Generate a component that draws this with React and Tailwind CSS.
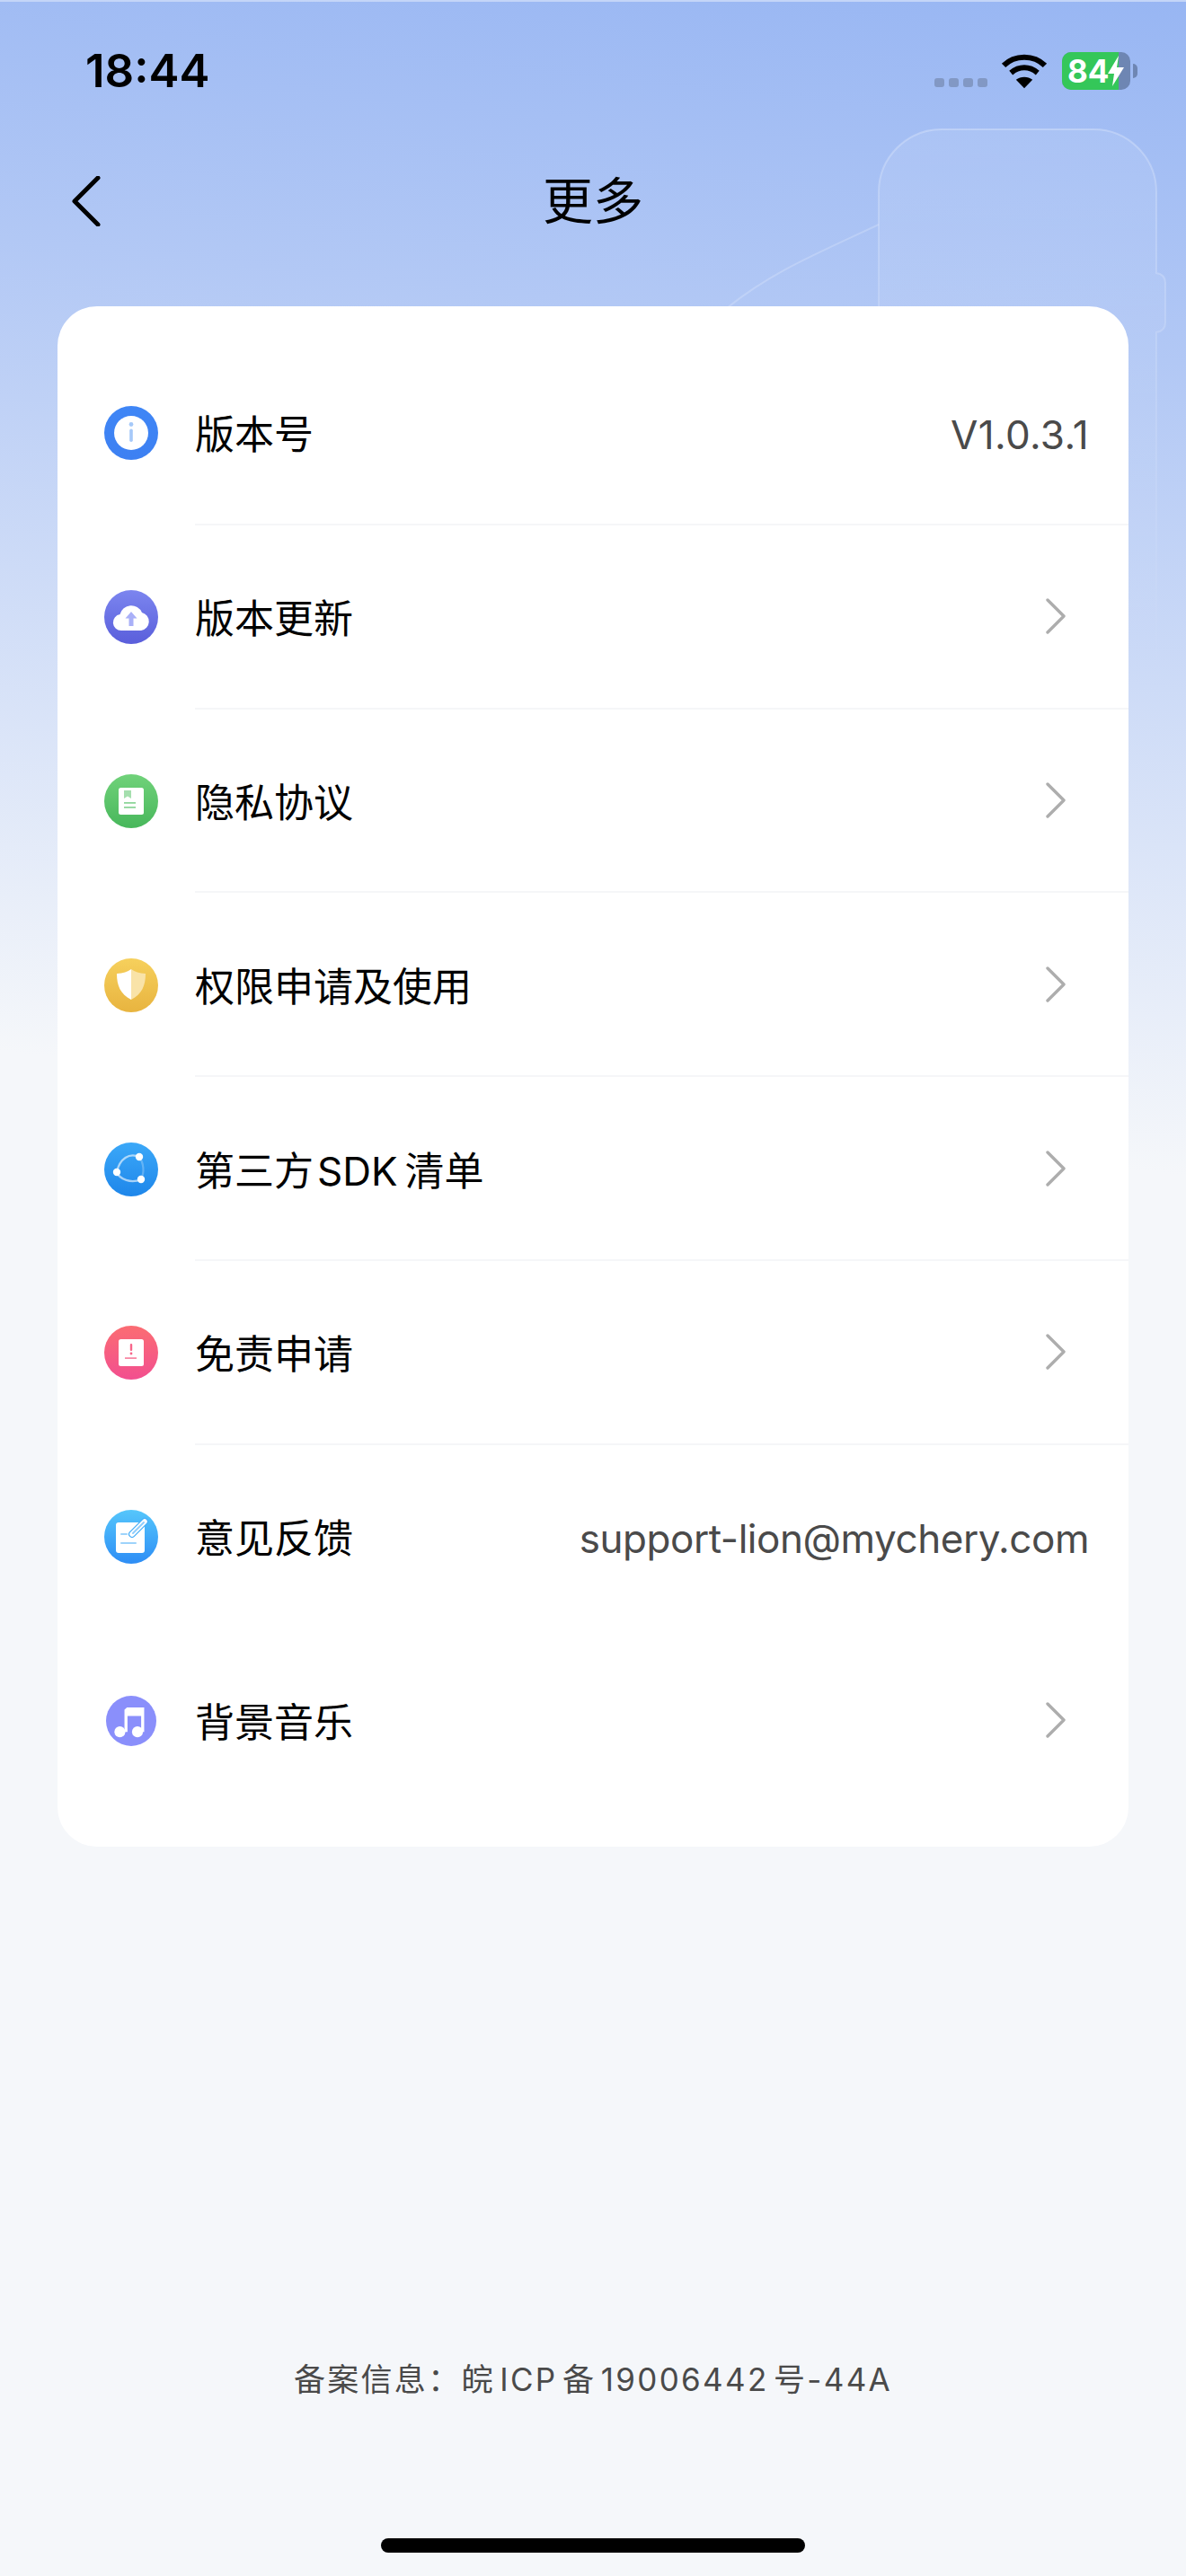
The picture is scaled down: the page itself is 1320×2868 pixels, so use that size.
import React from "react";

const FONT = 'font-["Inter","Noto_Sans_CJK_SC",sans-serif]';

// Icon glyphs, all on a 60x60 grid
const InfoGlyph = () => (
  <>
    <circle cx="30" cy="30" r="19" fill="#fff" />
    <circle cx="30" cy="20.5" r="2.4" fill="#a6c9f9" />
    <rect x="28.2" y="25.5" width="3.6" height="14.5" rx="1.8" fill="#a6c9f9" />
  </>
);

const CloudGlyph = () => (
  <>
    <path d="M19 45a9 9 0 0 1-1.5-17.9A13 13 0 0 1 42 25a10.2 10.2 0 0 1-1 20z" fill="#fff" />
    <path d="M30 24l6.5 7.5h-4V40h-5v-8.500h-4z" fill="#a9b0f8" />
  </>
);

const BookGlyph = () => (
  <>
    <rect x="16" y="15" width="28" height="30" rx="2.5" fill="#fff" />
    <path d="M22 18h8v9l-4-2.500-4 2.500z" fill="#a5dfae" />
    <rect x="22" y="31" width="13" height="1.800" fill="#8fd69b" />
    <rect x="22" y="36" width="13" height="1.800" fill="#8fd69b" />
  </>
);

const ShieldGlyph = () => (
  <>
    <path d="M30 12c-4 3-9 4.500-16 5 0 13 4 23 16 29z" fill="#fff" />
    <path d="M30 12c4 3 9 4.500 16 5 0 13-4 23-16 29z" fill="#f9e3a8" />
  </>
);

const SdkGlyph = () => (
  <>
    <path d="M39 16C28 11 17 18 14 33" fill="none" stroke="#fff" strokeOpacity="0.6" strokeWidth="2.200" />
    <path d="M14 33C17 41 30 46 41 41" fill="none" stroke="#fff" strokeOpacity="0.6" strokeWidth="2.200" />
    <path d="M41 41C45 33 44 23 39 16" fill="none" stroke="#fff" strokeOpacity="0.25" strokeWidth="2.200" />
    <circle cx="39" cy="16" r="4.200" fill="#fff" />
    <circle cx="14" cy="33" r="4.200" fill="#fff" />
    <circle cx="41" cy="41" r="4.200" fill="#fff" />
  </>
);

const AlertGlyph = () => (
  <>
    <rect x="16" y="15" width="28" height="30" rx="2.5" fill="#fff" />
    <rect x="28.800" y="20" width="2.400" height="8" rx="1" fill="#f7668a" />
    <circle cx="30" cy="31" r="1.400" fill="#f7668a" />
    <rect x="23" y="35.200" width="13" height="1.800" fill="#f88aa6" />
  </>
);

const NoteGlyph = () => (
  <>
    <rect x="13" y="14" width="32" height="34" rx="3" fill="#fff" />
    <rect x="18" y="26" width="8" height="2" rx="1" fill="#9dd3fb" />
    <rect x="18" y="36" width="18" height="2" rx="1" fill="#9dd3fb" />
    <path d="M31 27L45 13" stroke="#46aef8" strokeWidth="8" strokeLinecap="round" />
    <path d="M31 27L45 13" stroke="#fff" strokeWidth="5.500" strokeLinecap="round" />
    <path d="M32 26L44 14" stroke="#8fcdfb" strokeWidth="2" strokeLinecap="round" />
  </>
);

const MusicGlyph = () => (
  <>
    <path
      d="M22 43V16.500L25 14h20.500v29h-3.600V24H25.600v19z"
      fill="#fff"
    />
    <circle cx="16.500" cy="43" r="6.500" fill="#fff" />
    <circle cx="37.500" cy="43" r="6.500" fill="#fff" />
  </>
);

const Chevron = () => (
  <svg width="22" height="40" viewBox="0 0 22 40" className="mb-[6px] mr-[70px] shrink-0" fill="none">
    <path d="M2 2l18 18L2 38" stroke="#adadad" strokeWidth="3.400" strokeLinecap="round" strokeLinejoin="round" />
  </svg>
);

const rows = [
  { label: "版本号", value: "V1.0.3.1", wide: true, bg: "bg-linear-to-b from-[#3f86f6] to-[#3d80f2]", glyph: <InfoGlyph />, line: true },
  { label: "版本更新", bg: "bg-linear-to-b from-[#7c85ef] to-[#5a5edb]", glyph: <CloudGlyph />, line: true },
  { label: "隐私协议", bg: "bg-linear-to-b from-[#70d27a] to-[#47b75b]", glyph: <BookGlyph />, line: true },
  { label: "权限申请及使用", bg: "bg-linear-to-b from-[#f6d05c] to-[#e8b43f]", glyph: <ShieldGlyph />, line: true },
  { label: "第三方\u200aSDK\u2009清单", bg: "bg-linear-to-b from-[#3ba8f8] to-[#1e86ea]", glyph: <SdkGlyph />, line: true },
  { label: "免责申请", bg: "bg-linear-to-b from-[#fb6c72] to-[#f24e8f]", glyph: <AlertGlyph />, line: true },
  { label: "意见反馈", value: "support-lion@mychery.com", tight: true, bg: "bg-linear-to-b from-[#56c6fb] to-[#2e8df5]", glyph: <NoteGlyph /> },
  { label: "背景音乐", bg: "bg-[#8a8ffb]", glyph: <MusicGlyph />, small: true },
];

const Row = ({ item }) => (
  <div className="flex h-[204.8px] items-center pl-[52px]">
    <div className={`flex shrink-0 items-center justify-center rounded-full ${item.small ? "mx-[2px] h-[56px] w-[56px]" : "h-[60px] w-[60px]"} ${item.bg}`}>
      <svg viewBox="0 0 60 60" className="h-full w-full">{item.glyph}</svg>
    </div>
    <div className={`ml-[41px] flex h-full flex-1 items-center justify-between border-b-2 pt-[6px] ${item.line ? "border-[#f5f6f8]" : "border-transparent"}`}>
      <span className="text-[44px] text-black">{item.label}</span>
      {item.value ? (
        <span className={`mr-[44px] text-[44px] text-[#4a4a4a] ${item.tight ? "tracking-[-0.45px]" : ""} ${item.wide ? "tracking-[0.4px]" : ""}`}>{item.value}</span>
      ) : (
        <Chevron />
      )}
    </div>
  </div>
);

// The faint watch outline behind the header
const WatchOutline = () => (
  <svg className="absolute left-0 top-0" width="1320" height="760" viewBox="0 0 1320 760" fill="none">
    <defs>
      <linearGradient id="watchFill" x1="0" y1="0" x2="0" y2="1">
        <stop offset="0" stopColor="#fff" stopOpacity="0.09" />
        <stop offset="1" stopColor="#fff" stopOpacity="0" />
      </linearGradient>
      <linearGradient id="watchLine" x1="0" y1="0" x2="0" y2="1">
        <stop offset="0" stopColor="#fff" stopOpacity="0.25" />
        <stop offset="0.6" stopColor="#fff" stopOpacity="0.1" />
        <stop offset="1" stopColor="#fff" stopOpacity="0" />
      </linearGradient>
    </defs>
    <path
      d="M978 760V212a70 70 0 0 1 70-70h169a70 70 0 0 1 70 70v90c7 1 10 5 10 11v44c0 6-3 10-10 11v392z"
      fill="url(#watchFill)"
      stroke="url(#watchLine)"
      strokeWidth="2"
    />
    <path d="M978 248C910 280 860 300 809 341" stroke="#fff" strokeOpacity="0.2" strokeWidth="2" />
  </svg>
);

const StatusIcons = () => (
  <div className="flex items-center">
    <div className="mt-[26px] flex gap-[5px]">
      {[0, 1, 2, 3].map((i) => (
        <span key={i} className="h-[10px] w-[11px] rounded-[3px] bg-[#8298c4]" />
      ))}
    </div>
    <svg width="52" height="40" viewBox="0 0 51 38" className="ml-[15px]" fill="none">
      <path d="M3 13C15 1 36 1 48 13" stroke="#000" strokeWidth="6" />
      <path d="M11 21c9-7.500 20-7.500 29 0" stroke="#000" strokeWidth="6" />
      <path d="M25.500 38l-9-9.500c5-4 13-4 18 0z" fill="#000" />
    </svg>
    <div className="relative ml-[16px] flex h-[42px] w-[76px] items-center overflow-hidden rounded-[10px] bg-[#6e86b3]">
      <div className="absolute inset-y-0 left-0 w-[63px] bg-[#34c759]" />
      <span className="relative ml-[6px] text-[35px] leading-none font-bold text-white">84</span>
      <svg width="18" height="34" viewBox="0 0 18 34" className="relative -ml-[1px]">
        <path d="M12 0L0 20h7l-2 14L18 13h-8z" fill="#fff" />
      </svg>
    </div>
    <span className="ml-[3px] h-[16px] w-[5px] rounded-r-full bg-[#6e86b3]" />
  </div>
);

export default function App() {
  return (
    <div className={`relative flex h-[2868px] w-[1320px] flex-col overflow-hidden border-t-2 border-[#c4d5f8] bg-[linear-gradient(186deg,#98b6f3_0px,#b2c8f5_400px,#f5f7fa_1300px)] ${FONT}`}>
      <WatchOutline />

      <div className="relative flex h-[160px] items-center justify-between pb-[6px] pl-[95px] pr-[54px]">
        <span className="text-[51px] font-semibold text-black">18:44</span>
        <StatusIcons />
      </div>

      <div className="relative flex h-[124px] items-center pl-[80px]">
        <svg width="32" height="56" viewBox="0 0 32 56" fill="none">
          <path d="M29 2L3 28l26 26" stroke="#000" strokeWidth="5" strokeLinecap="round" strokeLinejoin="round" />
        </svg>
        <span className="absolute inset-x-0 text-center text-[56px] text-black">更多</span>
      </div>

      <div className="relative mx-[64px] mt-[55px] rounded-[44px] bg-white pb-[38px] pt-[39px]">
        {rows.map((item) => (
          <Row key={item.label} item={item} />
        ))}
      </div>

      <div className="mt-auto flex flex-col items-center">
        <span className="text-[35px] tracking-[2.3px] text-[#4a4a4a]">备案信息：皖{"\u200a"}ICP{"\u200a"}备{"\u200a"}19006442{"\u200a"}号-44A</span>
        <span className="mb-[26px] mt-[151px] h-[16px] w-[472px] rounded-full bg-black" />
      </div>
    </div>
  );
}
